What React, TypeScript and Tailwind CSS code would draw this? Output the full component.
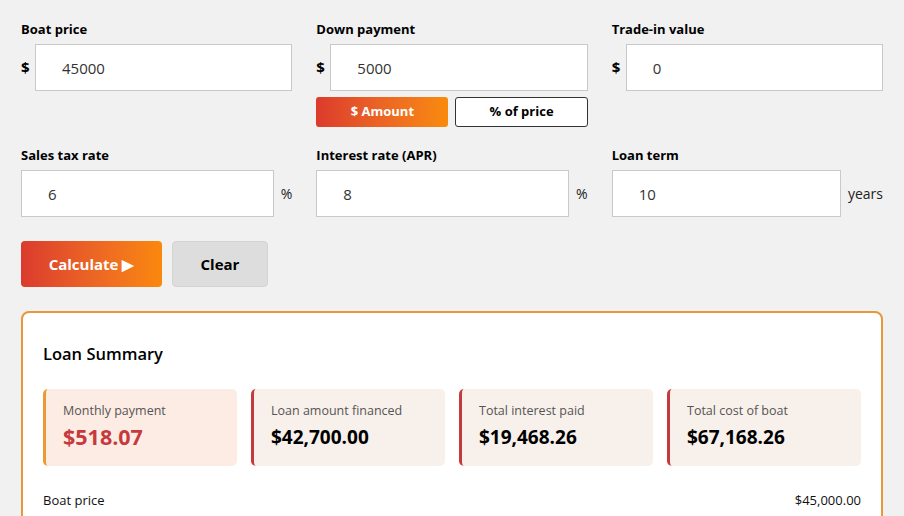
import React from 'react';

const FONT = '"Open Sans", "Noto Sans", Arial, sans-serif';

function Field({ label, prefix, suffix, value }: { label: string; prefix?: string; suffix?: string; value: string }) {
  return (
    <div className="flex flex-col">
      <label className="text-[13px] font-bold leading-5 text-black mb-[5px]">{label}</label>
      <div className="flex items-center">
        {prefix && <span className="text-[15px] font-bold text-black w-[14px] shrink-0">{prefix}</span>}
        <input
          readOnly
          value={value}
          className="h-[47px] flex-1 min-w-0 bg-white border border-[#c9c9c9] pl-[26px] text-[15px] text-[#333] outline-none"
        />
        {suffix && <span className="text-[14px] text-[#222] pl-[7px] shrink-0">{suffix}</span>}
      </div>
    </div>
  );
}

function Stat({ label, value, first }: { label: string; value: string; first?: boolean }) {
  return (
    <div
      className={
        first
          ? 'rounded-[5px] border-l-[3px] border-[#ea9a35] bg-[#fdece4] pl-[17px] pt-[13px] pb-[16px]'
          : 'rounded-[5px] border-l-[3px] border-[#c63a3e] bg-[#f8f0eb] pl-[17px] pt-[13px] pb-[16px]'
      }
    >
      <div className="text-[12.5px] leading-[18px] text-[#555]">{label}</div>
      <div className={first ? 'mt-[4px] text-[21.5px] font-bold leading-[26px] text-[#c63a3e]' : 'mt-[4px] text-[19px] font-bold leading-[26px] text-black'}>
        {value}
      </div>
    </div>
  );
}

export default function App() {
  return (
    <div className="min-h-screen bg-[#f1f1f1] px-[21px] pt-[19px]" style={{ fontFamily: FONT }}>
      <div className="grid grid-cols-3 gap-x-[24px] gap-y-[18px]">
        <Field label="Boat price" prefix="$" value="45000" />
        <div className="flex flex-col">
          <Field label="Down payment" prefix="$" value="5000" />
          <div className="mt-[6px] grid grid-cols-2 gap-[7px]">
            <button className="h-[30px] rounded-[3px] bg-gradient-to-r from-[#dc3a2c] to-[#f98a0b] text-[13px] font-bold text-white">
              $ Amount
            </button>
            <button className="h-[30px] rounded-[3px] border border-[#333] bg-white text-[13px] font-bold text-black">
              % of price
            </button>
          </div>
        </div>
        <Field label="Trade-in value" prefix="$" value="0" />
        <Field label="Sales tax rate" suffix="%" value="6" />
        <Field label="Interest rate (APR)" suffix="%" value="8" />
        <Field label="Loan term" suffix="years" value="10" />
      </div>

      <div className="mt-[24px] flex gap-[10px]">
        <button className="h-[46px] w-[141px] rounded-[4px] bg-gradient-to-r from-[#db3a2d] to-[#fa880b] text-[15px] font-bold text-white">
          Calculate ▶
        </button>
        <button className="h-[46px] w-[96px] rounded-[4px] border border-[#d4d4d4] bg-[#dddddd] text-[15px] font-bold text-black">
          Clear
        </button>
      </div>

      <div className="mt-[24px] rounded-[8px] border-2 border-[#e8983a] bg-white px-[20px] pt-[28px] pb-[20px]">
        <h2 className="text-[16.5px] font-semibold leading-[26px] text-black">Loan Summary</h2>
        <div className="mt-[22px] grid grid-cols-4 gap-[14px]">
          <Stat first label="Monthly payment" value="$518.07" />
          <Stat label="Loan amount financed" value="$42,700.00" />
          <Stat label="Total interest paid" value="$19,468.26" />
          <Stat label="Total cost of boat" value="$67,168.26" />
        </div>
        <div className="mt-[24px] flex justify-between text-[13px] leading-5 text-[#111]">
          <span>Boat price</span>
          <span>$45,000.00</span>
        </div>
      </div>
    </div>
  );
}
